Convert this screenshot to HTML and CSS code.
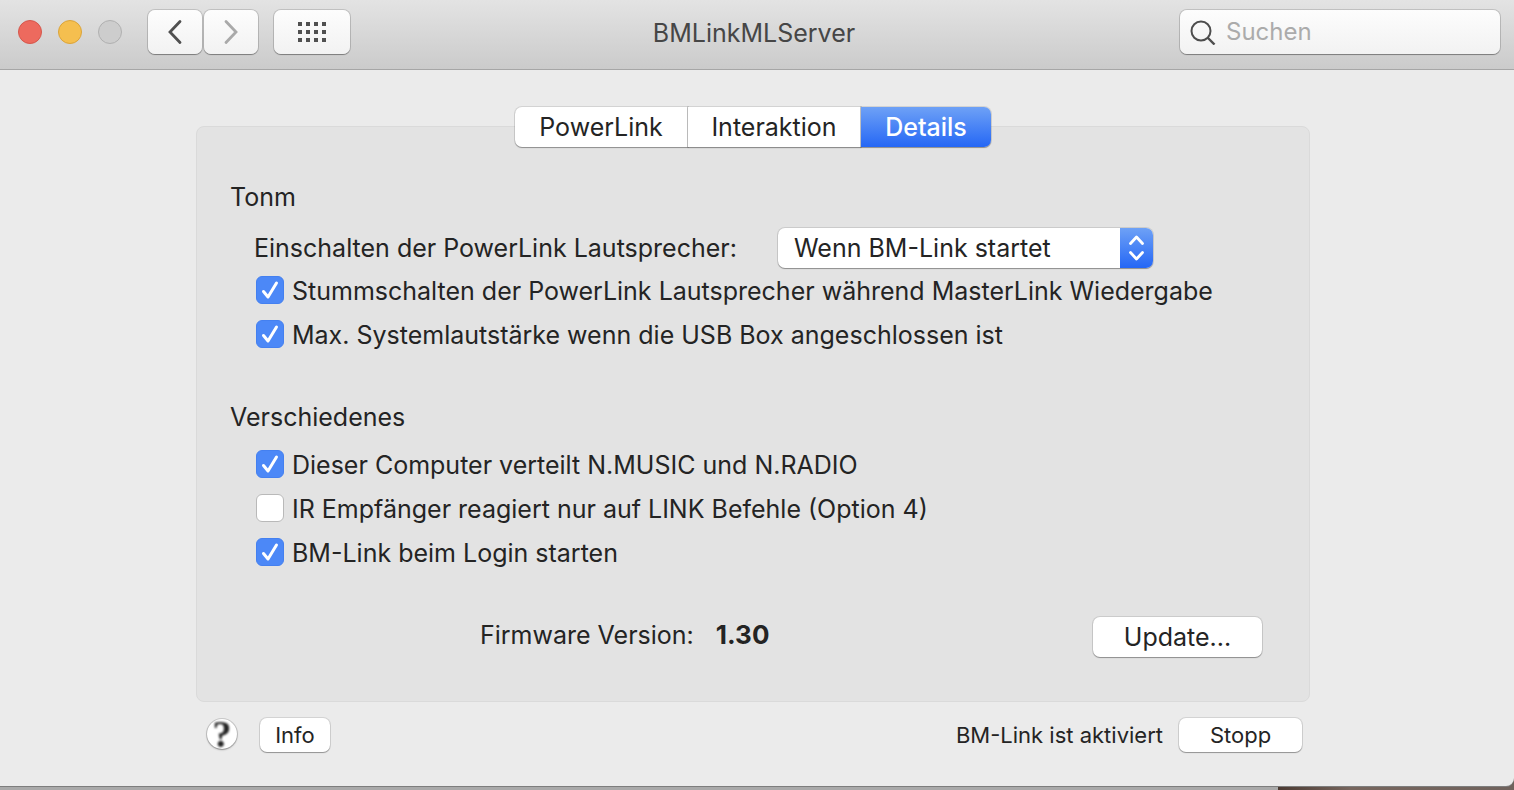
FILE: index.html
```html
<!DOCTYPE html>
<html lang="de">
<head>
    <meta charset="UTF-8">
    <meta name="viewport" content="width=device-width, initial-scale=1.0">
    <title>BMLinkMLServer</title>
    <link rel="stylesheet" href="styles.css">
</head>
<body>
<div class="window">
    <header class="toolbar">
        <div class="toolbar-left">
            <div class="lights">
                <button class="light close" aria-label="Schließen"></button>
                <button class="light minimize" aria-label="Minimieren"></button>
                <button class="light zoom" aria-label="Vergrößern" disabled></button>
            </div>
            <div class="nav">
                <button class="tool-button" aria-label="Zurück">
                    <svg width="16" height="26" viewBox="0 0 16 26"><path d="M13 2.500L3 13l10 10.500" fill="none" stroke="#505050" stroke-width="2.800" stroke-linecap="round"/></svg>
                </button>
                <button class="tool-button" aria-label="Vorwärts">
                    <svg width="16" height="26" viewBox="0 0 16 26"><path d="M3 2.500L13 13L3 23.500" fill="none" stroke="#a9a9a9" stroke-width="2.800" stroke-linecap="round"/></svg>
                </button>
            </div>
            <button class="tool-button show-all" aria-label="Alle einblenden">
                <svg width="28" height="20" viewBox="0 0 28 20" fill="#505050">
                    <path d="M0 0h4v4H0zM8 0h4v4H8zM16 0h4v4h-4zM24 0h4v4h-4zM0 8h4v4H0zM8 8h4v4H8zM16 8h4v4h-4zM24 8h4v4h-4zM0 16h4v4H0zM8 16h4v4H8zM16 16h4v4h-4zM24 16h4v4h-4z"/>
                </svg>
            </button>
        </div>
        <h1 class="title">BMLinkMLServer</h1>
        <label class="search">
            <svg width="26" height="26" viewBox="0 0 26 26" fill="none" stroke="#4d4d4d" stroke-width="2"><circle cx="11" cy="12" r="9.500"/><path d="M17.500 18.500l7 7" stroke-width="2.400"/></svg>
            <input type="search" placeholder="Suchen" aria-label="Suchen">
        </label>
    </header>

    <main class="content">
        <section class="panel">
            <div class="tabs" role="tablist">
                <button class="tab" role="tab">PowerLink</button>
                <button class="tab" role="tab">Interaktion</button>
                <button class="tab active" role="tab" aria-selected="true">Details</button>
            </div>

            <h2>Tonm</h2>
            <div class="group sound">
                <div class="select-row">
                    <label for="powerOn">Einschalten der PowerLink Lautsprecher:</label>
                    <div class="popup">
                        <select id="powerOn">
                            <option>Wenn BM-Link startet</option>
                        </select>
                        <svg class="popup-arrows" width="33" height="40" viewBox="0 0 33 40" fill="none" stroke="#fff" stroke-width="2.800" stroke-linecap="round" stroke-linejoin="round"><path d="M10.500 15.500l6-6.500 6 6.500M10.500 24.500l6 6.500 6-6.500"/></svg>
                    </div>
                </div>
                <div class="check-row">
                    <input type="checkbox" id="mute" checked>
                    <svg class="tick" width="28" height="28" viewBox="0 0 28 28"><path d="M7.500 15.500l4.500 5.500 8.500-14"/></svg>
                    <label for="mute">Stummschalten der PowerLink Lautsprecher während MasterLink Wiedergabe</label>
                </div>
                <div class="check-row">
                    <input type="checkbox" id="maxVolume" checked>
                    <svg class="tick" width="28" height="28" viewBox="0 0 28 28"><path d="M7.500 15.500l4.500 5.500 8.500-14"/></svg>
                    <label for="maxVolume">Max. Systemlautstärke wenn die USB Box angeschlossen ist</label>
                </div>
            </div>

            <h2>Verschiedenes</h2>
            <div class="group">
                <div class="check-row">
                    <input type="checkbox" id="distribute" checked>
                    <svg class="tick" width="28" height="28" viewBox="0 0 28 28"><path d="M7.500 15.500l4.500 5.500 8.500-14"/></svg>
                    <label for="distribute">Dieser Computer verteilt N.MUSIC und N.RADIO</label>
                </div>
                <div class="check-row">
                    <input type="checkbox" id="irLink">
                    <svg class="tick" width="28" height="28" viewBox="0 0 28 28"><path d="M7.500 15.500l4.500 5.500 8.500-14"/></svg>
                    <label for="irLink">IR Empfänger reagiert nur auf LINK Befehle (Option 4)</label>
                </div>
                <div class="check-row">
                    <input type="checkbox" id="login" checked>
                    <svg class="tick" width="28" height="28" viewBox="0 0 28 28"><path d="M7.500 15.500l4.500 5.500 8.500-14"/></svg>
                    <label for="login">BM-Link beim Login starten</label>
                </div>
            </div>

            <div class="firmware">
                <span>Firmware Version:</span>
                <strong>1.30</strong>
                <button class="button update">Update...</button>
            </div>
        </section>

        <footer class="footer">
            <button class="help" aria-label="Hilfe"><span>?</span></button>
            <button class="button small">Info</button>
            <span class="status">BM-Link ist aktiviert</span>
            <button class="button small stop">Stopp</button>
        </footer>
    </main>
</div>
</body>
</html>
```
FILE: styles.css
```css
* {
    box-sizing: border-box;
}
body {
    margin: 0;
    min-height: 100vh;
    background: linear-gradient(to right, #a9a9a9 1278px, #4b3a32 1278px, #76655d 1350px, #6f625c);
    font-family: Inter, "Liberation Sans", sans-serif;
    font-size: 25px;
    line-height: 32px;
    color: #242424;
    overflow: hidden;
}
button, input, select {
    font: inherit;
    color: inherit;
    margin: 0;
    padding: 0;
    border: none;
}
svg {
    display: block;
}
.window {
    background-color: #ebebeb;
    border-bottom-right-radius: 8px;
    box-shadow: 0 1px 0 #7d7d7d;
}

/* toolbar */
.toolbar {
    display: grid;
    grid-template-columns: 1fr auto 1fr;
    height: 70px;
    padding: 10px 14px 0 18px;
    background: linear-gradient(#e3e3e3, #cbcbcb);
    border-bottom: 1px solid #a6a6a6;
}
.toolbar-left {
    display: flex;
}
.lights {
    display: flex;
    gap: 16px;
    padding-top: 10px;
    margin-right: 26px;
}
.light {
    width: 24px;
    height: 24px;
    border-radius: 50%;
}
.close {
    background-color: #ed6a5e;
    border: 1px solid #d5574c;
}
.minimize {
    background-color: #f5bf4f;
    border: 1px solid #dba43a;
}
.zoom {
    background-color: #cdcdcd;
    border: 1px solid #b0b0b0;
}
.nav {
    display: flex;
    gap: 2px;
    margin-right: 16px;
}
.tool-button {
    display: flex;
    align-items: center;
    justify-content: center;
    width: 54px;
    height: 44px;
    border-radius: 7px;
    background: linear-gradient(#fdfdfd, #f2f2f2);
    box-shadow: 0 0 0 1px rgba(0, 0, 0, 0.14), 0 1px 1px rgba(0, 0, 0, 0.3);
}
.show-all {
    width: 76px;
}
.title {
    margin: 0;
    padding: 7px 10px 0 0;
    font-size: 25px;
    font-weight: 400;
    color: #464646;
}
.search {
    justify-self: end;
    display: flex;
    align-items: center;
    gap: 10px;
    width: 320px;
    height: 44px;
    padding: 0 10px;
    border-radius: 7px;
    background: linear-gradient(#fdfdfd, #f2f2f2);
    box-shadow: 0 0 0 1px rgba(0, 0, 0, 0.14), 0 1px 1px rgba(0, 0, 0, 0.3);
}
.search svg {
    flex: none;
}
.search input {
    flex: 1;
    min-width: 0;
    background: none;
    outline: none;
    appearance: none;
    font-size: 24px;
}
.search input::placeholder {
    color: #ababab;
}

/* settings panel */
.content {
    padding: 56px 204px 34px 196px;
}
.panel {
    padding: 0 33px 44px;
    background-color: #e3e3e3;
    border: 1px solid #dadada;
    border-radius: 8px;
}
.tabs {
    display: flex;
    width: 476px;
    height: 40px;
    margin: -20px auto 34px;
}
.tab {
    width: 173px;
    background-color: #fff;
    border-right: 1px solid #dcdcdc;
    box-shadow: 0 0 0 1px rgba(0, 0, 0, 0.1), 0 1px 1px rgba(0, 0, 0, 0.3);
}
.tab:first-child {
    border-radius: 7px 0 0 7px;
}
.tab.active {
    width: 130px;
    border: none;
    border-radius: 0 7px 7px 0;
    background: linear-gradient(#6ea1f6, #2567f5);
    color: #fff;
    font-weight: 500;
}
.panel h2 {
    margin: 0 0 9px;
    font-size: 25px;
    font-weight: 400;
}
.group {
    padding-left: 24px;
    margin-bottom: 43px;
}
.sound {
    padding-top: 6px;
    margin-bottom: 45px;
}
.select-row {
    display: flex;
    align-items: center;
    height: 40px;
}
.select-row label {
    width: 524px;
}
.popup {
    display: grid;
    width: 375px;
    height: 40px;
    border-radius: 7px;
    overflow: hidden;
    background-color: #fff;
    box-shadow: 0 0 0 1px rgba(0, 0, 0, 0.1), 0 1px 1px rgba(0, 0, 0, 0.3);
}
.popup select {
    grid-area: 1 / 1;
    appearance: none;
    padding-left: 16px;
    background: none;
}
.popup-arrows {
    grid-area: 1 / 1;
    justify-self: end;
    background: linear-gradient(#6ea1f6, #2567f5);
    pointer-events: none;
}
.check-row {
    display: grid;
    grid-template-columns: 28px 1fr;
    column-gap: 8px;
    align-items: center;
    height: 44px;
    padding-left: 2px;
}
.check-row input {
    grid-area: 1 / 1;
    appearance: none;
    width: 28px;
    height: 28px;
    border: 1px solid #b9b9b9;
    border-radius: 6px;
    background-color: #fff;
}
.check-row input:checked {
    border-color: #4480f0;
    background-color: #4c88f7;
}
.tick {
    grid-area: 1 / 1;
    fill: none;
    stroke: #fff;
    stroke-width: 3;
    stroke-linecap: round;
    stroke-linejoin: round;
    pointer-events: none;
}
.check-row input:not(:checked) + .tick {
    visibility: hidden;
}
.check-row label {
    line-height: 34px;
    padding-top: 2px;
    white-space: nowrap;
}
.firmware {
    display: flex;
    padding: 0 14px 0 250px;
    line-height: 36px;
}
.firmware strong {
    margin-left: 22px;
    font-size: 26px;
    font-weight: 700;
}
.button {
    height: 40px;
    border-radius: 7px;
    background-color: #fff;
    box-shadow: 0 0 0 1px rgba(0, 0, 0, 0.1), 0 1px 1px rgba(0, 0, 0, 0.3);
}
.update {
    width: 169px;
    margin-left: auto;
}

/* footer */
.footer {
    display: flex;
    align-items: center;
    padding: 16px 8px 0 11px;
    font-size: 22px;
}
.help {
    align-self: flex-start;
    width: 30px;
    height: 30px;
    margin: 1px 23px 0 0;
    border-radius: 50%;
    background-color: #fff;
    box-shadow: 0 0 0 1px rgba(0, 0, 0, 0.14), 0 1px 2px rgba(0, 0, 0, 0.3);
    font-family: "Liberation Serif", serif;
    font-size: 38px;
    font-weight: 700;
    line-height: 28px;
}
.help span {
    filter: blur(1px);
}
.small {
    width: 70px;
    height: 34px;
}
.stop {
    width: 123px;
}
.status {
    margin-left: auto;
    margin-right: 16px;
}
```
